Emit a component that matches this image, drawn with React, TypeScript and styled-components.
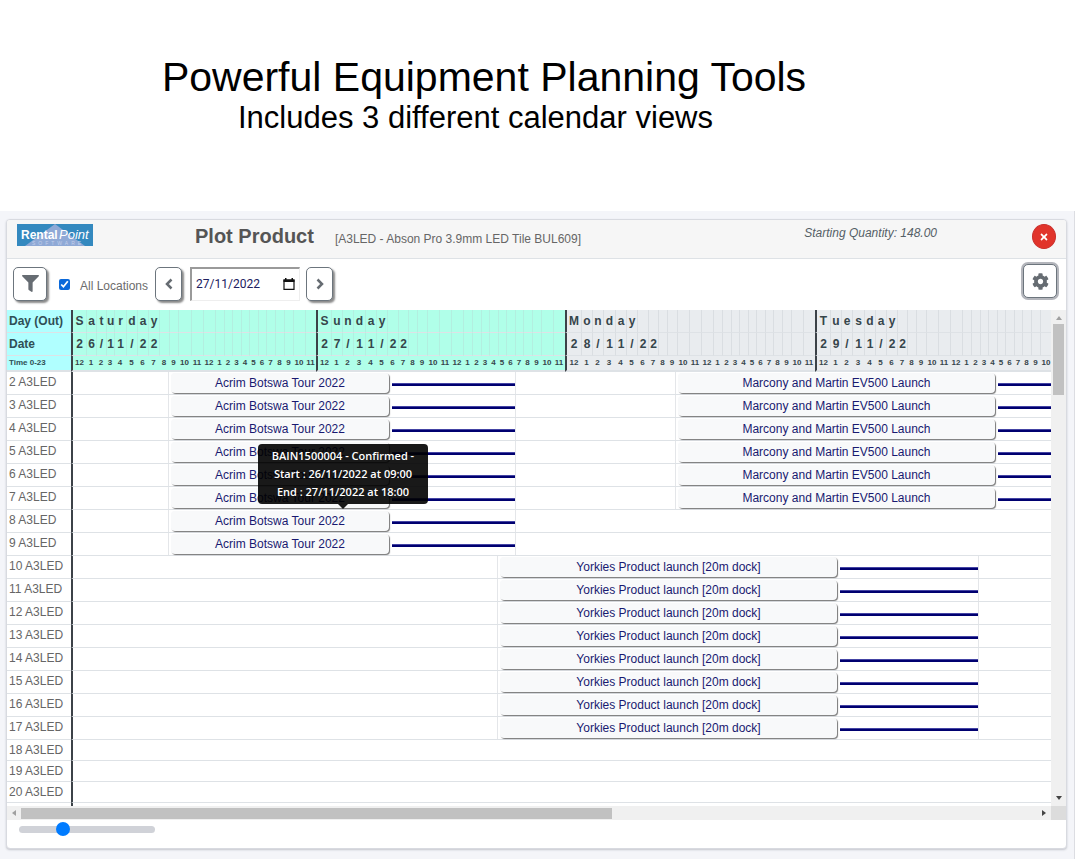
import React from "react";
import styled, { createGlobalStyle } from "styled-components";
import { FaCog, FaFilter, FaTimes } from "react-icons/fa";

const GlobalStyle = createGlobalStyle`
  *, *::before, *::after { box-sizing: border-box; }
  body {
    margin: 0;
    background: #ffffff;
    color: #5b6065;
    font-family: "Liberation Sans", Arial, Helvetica, sans-serif;
    font-size: 12px;
    line-height: 16px;
  }
  button, input { font: inherit; color: inherit; margin: 0; }
`;

const LINE = "#dee2e6";
const NAVY = "#191970";

/* ---------- promo heading ---------- */

const Hero = styled.header`
  padding: 54px 108px 76px 0;
  color: #000000;
  text-align: center;
`;

const HeroTitle = styled.h1`
  margin: 0;
  font-size: 41px;
  line-height: 46px;
  font-weight: 400;
`;

const HeroSubtitle = styled.p`
  margin: 0 17px 0 0;
  font-size: 31px;
  line-height: 35px;
`;

/* ---------- panel ---------- */

const Backdrop = styled.main`
  margin-right: 1px;
  padding: 8px 7px 10px 6px;
  background: #f4f5f9;
  border-right: 1px solid #dcdde2;
`;

const Card = styled.section`
  background: #ffffff;
  border: 1px solid #d8dae0;
  border-radius: 4px;
  box-shadow: 0 1px 2px rgba(60, 64, 80, 0.25);
  overflow: hidden;
`;

const CardHeader = styled.div`
  display: flex;
  align-items: flex-start;
  height: 39px;
  padding: 4px 10px 0;
  background: #f6f6f6;
  border-bottom: 1px solid ${LINE};
`;

const Logo = styled.svg`
  display: block;
  width: 76px;
  height: 22px;
  flex: none;
`;

const PlotTitle = styled.h2`
  margin: 0 0 0 102px;
  font-size: 20px;
  line-height: 24px;
  font-weight: 700;
  color: #555555;
`;

const ProductName = styled.span`
  margin: 7px 0 0 21px;
  color: #666666;
`;

const StartQuantity = styled.em`
  margin: 1px 95px 0 auto;
  color: #555f66;
`;

const CloseButton = styled.button`
  display: grid;
  place-items: center;
  width: 24px;
  height: 25px;
  padding: 0;
  border: 1px solid #c9302c;
  border-radius: 50%;
  background: #e1342b;
  color: #ffffff;
`;

const Toolbar = styled.div`
  display: flex;
  align-items: center;
  height: 51px;
  padding: 0 9px 2px 6px;
`;

const ToolButton = styled.button<{ $narrow?: boolean; $focused?: boolean }>`
  display: grid;
  place-items: center;
  align-self: ${(p) => (p.$focused ? "flex-start" : "center")};
  width: ${(p) => (p.$narrow ? 27 : 34)}px;
  height: 34px;
  margin-top: ${(p) => (p.$focused ? 5 : 0)}px;
  padding: 0;
  color: #666c72;
  background: #ffffff;
  border: 1px solid #6c757d;
  border-radius: 5px;
  box-shadow: ${(p) => (p.$focused ? "0 0 0 2px #b4b6bc" : "2px 2px 2px #8a8a8a")};
`;

const LocationLabel = styled.label`
  display: flex;
  align-items: center;
  gap: 10px;
  margin: 4px 7px 0 12px;
  color: #6c6c6c;
`;

const Tick = styled.input`
  width: 11px;
  height: 11px;
  margin: 0 0 3px;
  accent-color: #0b69da;
`;

const DateBox = styled.div`
  display: flex;
  align-items: center;
  width: 110px;
  height: 34px;
  margin: 0 6px 0 8px;
  padding: 0 4px;
  border: 1px solid #eeeeee;
  border-top: 2px solid #9a9a9a;
  border-left: 2px solid #9a9a9a;
`;

const DateInput = styled.input`
  flex: 1;
  min-width: 0;
  padding: 0;
  border: 0;
  background: none;
  color: #202060;
  font-family: Roboto, "Liberation Sans", sans-serif;
  font-size: 12px;
`;

const Spacer = styled.div`
  flex: 1;
`;

/* ---------- calendar ---------- */

const CalendarFrame = styled.div`
  display: grid;
  grid-template-columns: minmax(0, 1fr) 15px;
  grid-template-rows: 496px 14px;
`;

const Viewport = styled.div`
  overflow: hidden;
`;

const Grid = styled.table`
  table-layout: fixed;
  width: 1045px;
  border-collapse: separate;
  border-spacing: 0;
`;

const HeadLabel = styled.th<{ $small?: boolean }>`
  padding: 0 0 0 2px;
  height: ${(p) => (p.$small ? 16 : 23)}px;
  text-align: left;
  font-size: ${(p) => (p.$small ? 8 : 12)}px;
  line-height: 14px;
  background: #b0ffff;
  color: #2f4f55;
  border-bottom: ${(p) => (p.$small ? 2 : 1)}px solid ${LINE};
  white-space: nowrap;
`;

const HeadCell = styled.th<{ $weekend: boolean; $first: boolean; $small?: boolean }>`
  padding: 0;
  text-align: center;
  font-size: ${(p) => (p.$small ? 8 : 12)}px;
  line-height: 14px;
  color: #36454b;
  background: ${(p) => (p.$weekend ? "#b0ffe9" : "#e9ecef")};
  border-bottom: ${(p) => (p.$small ? 2 : 1)}px solid ${LINE};
  border-left: ${(p) =>
    p.$first
      ? "2px solid #3c4248"
      : p.$small
      ? "0"
      : p.$weekend
      ? "1px solid #b2efe0"
      : "1px solid #dadee2"};
`;

const RowLabel = styled.th<{ $short: boolean }>`
  height: ${(p) => (p.$short ? 21 : 23)}px;
  padding: 0 0 ${(p) => (p.$short ? 0 : 2)}px 2px;
  text-align: left;
  font-weight: 400;
  line-height: 16px;
  color: #666666;
  border-bottom: 1px solid ${LINE};
  white-space: nowrap;
`;

const Lane = styled.td`
  padding: 0;
  border-left: 2px solid #3c4248;
  border-bottom: 1px solid ${LINE};
`;

const Track = styled.div`
  display: flex;
  height: 22px;
`;

const Gap = styled.div<{ $w: number }>`
  flex: none;
  width: ${(p) => p.$w}px;
  border-right: 1px solid #e4e6e9;
`;

const Booking = styled.div<{ $w: number }>`
  position: relative;
  flex: none;
  width: ${(p) => p.$w}px;
  height: 20px;
  margin: 1px 2px 0;
  line-height: 20px;
  text-align: center;
  color: ${NAVY};
  background: #f8f9fa;
  border-radius: 4px;
  box-shadow: 1px 1px 1px #777777;
`;

const Tail = styled.div<{ $w: number }>`
  display: flex;
  align-items: center;
  flex: none;
  width: ${(p) => p.$w}px;
  padding-top: 3px;
  border-right: 1px solid #e4e6e9;

  &::before {
    content: "";
    flex: 1;
    margin-left: 1px;
    height: 3px;
    background: #000070;
    border-top: 1px solid #4444a4;
  }
`;

const Tooltip = styled.div`
  position: absolute;
  z-index: 2;
  left: 87px;
  bottom: 27px;
  width: 170px;
  padding: 3px 0;
  border-radius: 4px;
  background: rgba(0, 0, 0, 0.9);
  color: #ffffff;
  font-family: "Open Sans", "Noto Sans", sans-serif;
  font-size: 11px;
  font-weight: 600;
  line-height: 18px;
  text-align: center;
  white-space: nowrap;

  &::after {
    content: "";
    position: absolute;
    top: 100%;
    left: 80px;
    border: 5px solid transparent;
    border-top-color: rgba(0, 0, 0, 0.9);
    border-bottom: 0;
  }
`;

const VScroll = styled.div`
  display: flex;
  flex-direction: column;
  align-items: center;
  padding: 5px 0 5px;
  background: #f0f0f0;
`;

const VThumb = styled.div`
  width: 11px;
  height: 71px;
  margin: 3px 0 auto;
  background: #c1c1c1;
`;

const HScroll = styled.div`
  display: flex;
  align-items: center;
  padding: 0 4px;
  background: #f0f0f0;
`;

const HThumb = styled.div`
  width: 57%;
  height: 11px;
  margin: 0 auto 0 4px;
  background: #c1c1c1;
`;

const Corner = styled.div`
  background: #dcdcdc;
`;

const Arrow = styled.svg`
  display: block;
  flex: none;
`;

const CardFooter = styled.div`
  height: 28px;
  padding: 2px 12px;
`;

const Zoom = styled.input`
  display: block;
  width: 136px;
  height: 15px;
  appearance: none;
  background: transparent;

  &::-webkit-slider-runnable-track {
    height: 7px;
    border-radius: 4px;
    background: #d0d2d8;
  }
  &::-webkit-slider-thumb {
    appearance: none;
    width: 14px;
    height: 14px;
    margin-top: -4px;
    border-radius: 50%;
    background: #007bff;
  }
`;

/* ---------- data ---------- */

const HOURS = [12, 1, 2, 3, 4, 5, 6, 7, 8, 9, 10, 11, 12, 1, 2, 3, 4, 5, 6, 7, 8, 9, 10, 11];
const SUNDAY = [15, 11, 11, 12, 11, 11, 11, 10, 9, 10, 12, 12, 12, 9, 9, 8, 9, 8, 9, 8, 9, 9, 12, 12];

const DAYS = [
  {
    name: "Saturday",
    date: "26/11/22",
    weekend: true,
    widths: [15, 10, 10, 8, 12, 11, 11, 11, 10, 9, 13, 12, 12, 9, 8, 9, 8, 9, 8, 9, 9, 9, 12, 11],
  },
  { name: "Sunday", date: "27/11/22", weekend: true, widths: SUNDAY },
  { name: "Monday", date: "28/11/22", weekend: false, widths: [16, ...SUNDAY.slice(1)] },
  { name: "Tuesday", date: "29/11/22", weekend: false, widths: SUNDAY.slice(0, 23) },
];

const HOUR_COUNT = DAYS.reduce((sum, day) => sum + day.widths.length, 0);

type Plan = { lead: number; width: number; tail: number; title: string };

const ACRIM: Plan = { lead: 96, width: 218, tail: 125, title: "Acrim Botswa Tour 2022" };
const MARCONY: Plan = { lead: 160, width: 317, tail: 56, title: "Marcony and Martin EV500 Launch" };
const YORKIES: Plan = { lead: 425, width: 337, tail: 140, title: "Yorkies Product launch [20m dock]" };

const plansFor = (n: number): Plan[] => {
  if (n <= 7) return [ACRIM, MARCONY];
  if (n <= 9) return [ACRIM];
  if (n <= 17) return [YORKIES];
  return [];
};

const ROWS = Array.from({ length: 19 }, (_, i) => i + 2);

/* ---------- drawings ---------- */

const BrandLogo = () => (
  <Logo viewBox="0 0 76 22" role="img" aria-label="RentalPoint Software">
    <rect width="76" height="22" fill="#3489bf" />
    <path d="M8 22 L38 0 L68 22 Z" fill="#8fa9d6" />
    <text x="4" y="15" fontFamily="Liberation Sans" fontSize="12" fontWeight="700" fill="#ffffff">
      Rental
    </text>
    <text x="42" y="15" fontFamily="Liberation Sans" fontSize="13" fontStyle="italic" fill="#ffffff">
      Point
    </text>
    <text x="15" y="21" fontFamily="Liberation Sans" fontSize="5" letterSpacing="3" fill="#c3cfea">
      SOFTWARE
    </text>
  </Logo>
);

const Chevron = ({ right }: { right?: boolean }) => (
  <svg width="10" height="12" viewBox="0 0 10 12" aria-hidden="true">
    <path
      d={right ? "M2.500 1.500L7 6l-4.500 4.500" : "M7.500 1.500L3 6l4.500 4.500"}
      fill="none"
      stroke="currentColor"
      strokeWidth="2.500"
    />
  </svg>
);

const CalendarIcon = () => (
  <svg width="12" height="12" viewBox="0 0 12 12" aria-hidden="true">
    <path d="M1 2h10v9.400H1z" fill="none" stroke="#111111" strokeWidth="1.200" />
    <path d="M.5 1.500h11V4H.5zM2 0h1.500v2H2zM8.500 0H10v2H8.500z" fill="#111111" />
  </svg>
);

const Pointer = ({ d, fill }: { d: string; fill: string }) => (
  <Arrow width="6" height="6" viewBox="0 0 6 6" aria-hidden="true">
    <path d={d} fill={fill} />
  </Arrow>
);

/* ---------- parts ---------- */

type HeadRowProps = { label: string; small?: boolean; cell: (day: number, hour: number) => React.ReactNode };

const HeadRow = ({ label, small, cell }: HeadRowProps) => (
  <tr>
    <HeadLabel scope="row" $small={small}>
      {label}
    </HeadLabel>
    {DAYS.map((day, d) =>
      day.widths.map((_, h) => (
        <HeadCell key={`${d}-${h}`} $weekend={day.weekend} $first={h === 0} $small={small}>
          {cell(d, h)}
        </HeadCell>
      ))
    )}
  </tr>
);

const PlanRow = ({ n }: { n: number }) => {
  const plans = plansFor(n);
  return (
    <tr>
      <RowLabel scope="row" $short={plans.length === 0}>
        {n} A3LED
      </RowLabel>
      <Lane colSpan={HOUR_COUNT}>
        {plans.length > 0 && (
          <Track>
            {plans.map((p) => (
              <React.Fragment key={p.title}>
                <Gap $w={p.lead} />
                <Booking $w={p.width}>
                  <span>{p.title}</span>
                  {n === 8 && (
                    <Tooltip role="tooltip">
                      BAIN1500004 - Confirmed -
                      <br />
                      Start : 26/11/2022 at 09:00
                      <br />
                      End : 27/11/2022 at 18:00
                    </Tooltip>
                  )}
                </Booking>
                <Tail $w={p.tail} />
              </React.Fragment>
            ))}
          </Track>
        )}
      </Lane>
    </tr>
  );
};

export default function App() {
  return (
    <>
      <GlobalStyle />
      <Hero>
        <HeroTitle>Powerful Equipment Planning Tools</HeroTitle>
        <HeroSubtitle>Includes 3 different calendar views</HeroSubtitle>
      </Hero>
      <Backdrop>
        <Card>
          <CardHeader>
            <BrandLogo />
            <PlotTitle>Plot Product</PlotTitle>
            <ProductName>[A3LED - Abson Pro 3.9mm LED Tile BUL609]</ProductName>
            <StartQuantity>Starting Quantity: 148.00</StartQuantity>
            <CloseButton type="button" aria-label="Close">
              <FaTimes size={10} />
            </CloseButton>
          </CardHeader>
          <Toolbar>
            <ToolButton type="button" aria-label="Filter">
              <FaFilter size={17} />
            </ToolButton>
            <LocationLabel>
              <Tick type="checkbox" defaultChecked />
              All Locations
            </LocationLabel>
            <ToolButton type="button" $narrow aria-label="Previous day">
              <Chevron />
            </ToolButton>
            <DateBox>
              <DateInput type="text" aria-label="Date" defaultValue="27/11/2022" />
              <CalendarIcon />
            </DateBox>
            <ToolButton type="button" $narrow aria-label="Next day">
              <Chevron right />
            </ToolButton>
            <Spacer />
            <ToolButton type="button" $focused aria-label="Settings">
              <FaCog size={17} />
            </ToolButton>
          </Toolbar>
          <CalendarFrame>
            <Viewport>
              <Grid>
                <colgroup>
                  <col width={64} />
                  {DAYS.map((day, d) => day.widths.map((w, h) => <col key={`${d}-${h}`} width={w} />))}
                </colgroup>
                <thead>
                  <HeadRow label="Day (Out)" cell={(d, h) => DAYS[d].name[h]} />
                  <HeadRow label="Date" cell={(d, h) => DAYS[d].date[h]} />
                  <HeadRow label="Time 0-23" small cell={(_, h) => HOURS[h]} />
                </thead>
                <tbody>
                  {ROWS.map((n) => (
                    <PlanRow key={n} n={n} />
                  ))}
                  <tr>
                    <RowLabel as="td" $short />
                    <Lane colSpan={HOUR_COUNT} />
                  </tr>
                </tbody>
              </Grid>
            </Viewport>
            <VScroll>
              <Pointer d="M0 5h6L3 1z" fill="#a0a0a0" />
              <VThumb />
              <Pointer d="M0 1h6L3 5z" fill="#444444" />
            </VScroll>
            <HScroll>
              <Pointer d="M5 0v6L1 3z" fill="#a0a0a0" />
              <HThumb />
              <Pointer d="M1 0v6l4-3z" fill="#444444" />
            </HScroll>
            <Corner />
          </CalendarFrame>
          <CardFooter>
            <Zoom type="range" min={0} max={100} defaultValue={30} aria-label="Zoom" />
          </CardFooter>
        </Card>
      </Backdrop>
    </>
  );
}
